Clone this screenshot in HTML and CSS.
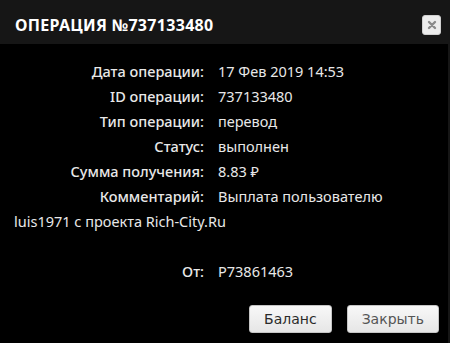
FILE: index.html
```html
<!DOCTYPE html>
<html lang="ru">
<head>
  <meta charset="UTF-8" />
  <title>Операция №737133480</title>
  <link rel="stylesheet" href="styles.css">
</head>
<body>
  <div class="dialog">
    <header class="dialog-head">
      <h1 class="dialog-title">Операция №737133480</h1>
      <button class="close-btn" title="Закрыть">
        <svg viewBox="0 0 10 10" width="10" height="10">
          <path d="M2 2 L8 8 M8 2 L2 8" stroke="#8a8a8a" stroke-width="2.4" stroke-linecap="round" />
        </svg>
      </button>
    </header>
    <main class="dialog-body">
      <div class="row"><span class="label">Дата операции:</span>17 Фев 2019 14:53</div>
      <div class="row"><span class="label">ID операции:</span>737133480</div>
      <div class="row"><span class="label">Тип операции:</span>перевод</div>
      <div class="row"><span class="label">Статус:</span>выполнен</div>
      <div class="row"><span class="label">Сумма получения:</span>8.83 ₽</div>
      <div class="row"><span class="label">Комментарий:</span>Выплата пользователю luis1971 с проекта Rich-City.Ru</div>
      <div class="row row-from"><span class="label">От:</span>P73861463</div>
    </main>
    <footer class="dialog-foot">
      <button class="btn btn-dark">Баланс</button>
      <button class="btn">Закрыть</button>
    </footer>
  </div>
</body>
</html>
```

FILE: styles.css
```css
/* Reset */
* {
  margin: 0;
  padding: 0;
  box-sizing: border-box;
}

body {
  background: #000;
  font-family: "Noto Sans", Arial, sans-serif;
  color: #e8e8e8;
}

/* Dialog frame */
.dialog {
  width: 450px;
  height: 343px;
  display: flex;
  flex-direction: column;
  border-right: 2px solid #161616;
}

.dialog-head {
  height: 44px;
  padding: 6px 7px 0 15px;
  background: #161616;
  display: flex;
  align-items: center;
  justify-content: space-between;
}
.dialog-title {
  font-size: 16px;
  font-weight: bold;
  text-transform: uppercase;
  letter-spacing: 0.3px;
  color: #fff;
}
.close-btn {
  width: 19px;
  height: 20px;
  border: 1px solid #d0d0d0;
  border-radius: 3px;
  background: #ececec;
  display: flex;
  align-items: center;
  justify-content: center;
}

/* Info rows */
.dialog-body {
  padding: 15px 14px 0;
  font-size: 14.5px;
  line-height: 25px;
}
.label {
  display: inline-block;
  width: 190px;
  margin-right: 14px;
  text-align: right;
  font-weight: 500;
}
.row-from {
  margin-top: 25px;
}

/* Buttons */
.dialog-foot {
  margin-top: auto;
  padding: 0 9px 10px 0;
  display: flex;
  justify-content: flex-end;
  gap: 15px;
}
.btn {
  height: 28px;
  padding: 0 14px;
  border: 1px solid #c5c5c5;
  border-radius: 3px;
  background: linear-gradient(#f8f8f8, #e6e6e6);
  font-family: "DejaVu Sans", sans-serif;
  font-size: 14px;
  color: #555;
}
.btn-dark {
  color: #2a2a2a;
}
```
